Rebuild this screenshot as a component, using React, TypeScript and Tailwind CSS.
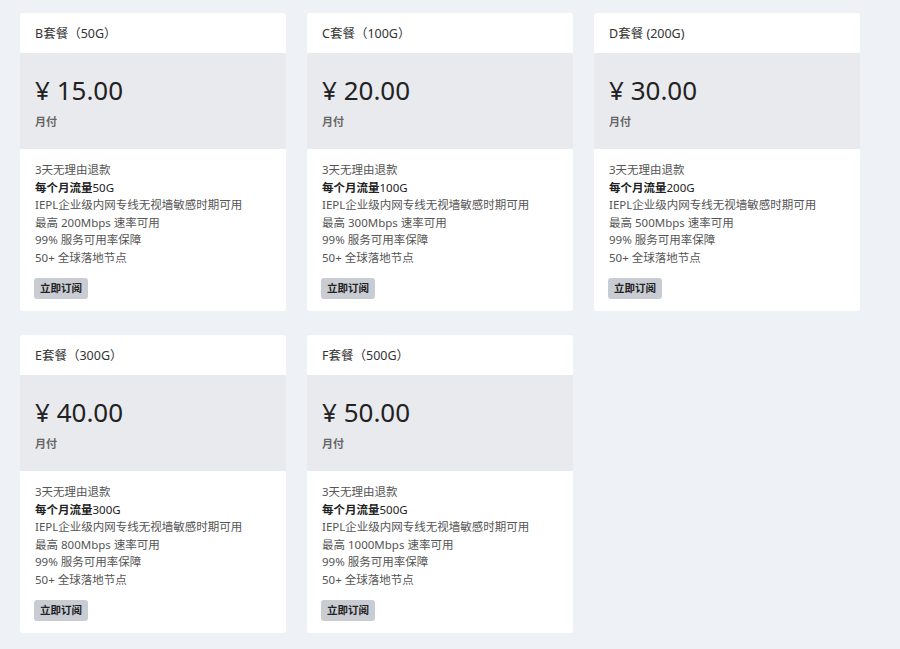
import React from "react";

type Plan = {
  name: string;
  price: string;
  traffic: string;
  speed: string;
};

const plans: Plan[] = [
  { name: "B套餐（50G）", price: "15.00", traffic: "50G", speed: "200Mbps" },
  { name: "C套餐（100G）", price: "20.00", traffic: "100G", speed: "300Mbps" },
  { name: "D套餐 (200G)", price: "30.00", traffic: "200G", speed: "500Mbps" },
  { name: "E套餐（300G）", price: "40.00", traffic: "300G", speed: "800Mbps" },
  { name: "F套餐（500G）", price: "50.00", traffic: "500G", speed: "1000Mbps" },
];

function PlanCard({ plan }: { plan: Plan }) {
  return (
    <div className="flex flex-col overflow-hidden rounded-[3px] bg-white">
      <div className="flex h-[40px] items-center px-[15px] pt-[3px] text-[12.5px] text-[#333]">
        {plan.name}
      </div>
      <div className="flex h-[96px] flex-col justify-center bg-[#e9eaee] px-[15px]">
        <div className="mt-[2px] text-[26px] leading-[32px] text-[#222]">¥ {plan.price}</div>
        <div className="mt-[8px] text-[11px] font-semibold leading-[16px] text-[#666]">月付</div>
      </div>
      <div className="flex flex-col px-[15px] pt-[12px] pb-[12px] text-[11.5px] leading-[17.5px] text-[#555]">
        <div>3天无理由退款</div>
        <div className="text-[#222]">
          <span className="font-bold">每个月流量</span>
          {plan.traffic}
        </div>
        <div>IEPL企业级内网专线无视墙敏感时期可用</div>
        <div>最高 {plan.speed} 速率可用</div>
        <div>99% 服务可用率保障</div>
        <div>50+ 全球落地节点</div>
        <div className="mt-[12px] -ml-px">
          <button className="h-[21px] rounded-[3px] bg-[#c9cdd3] px-[6px] text-[10.5px] font-bold text-[#222]">
            立即订阅
          </button>
        </div>
      </div>
    </div>
  );
}

export default function App() {
  return (
    <div
      className="min-h-[649px] w-full bg-[#eef1f6] pt-[13px] pl-[20px]"
      style={{ fontFamily: '"Noto Sans", "Noto Sans CJK SC", sans-serif' }}
    >
      <div className="grid grid-cols-[266px_266px_266px] gap-x-[21px] gap-y-[24px]">
        {plans.map((p) => (
          <PlanCard key={p.name} plan={p} />
        ))}
      </div>
    </div>
  );
}
